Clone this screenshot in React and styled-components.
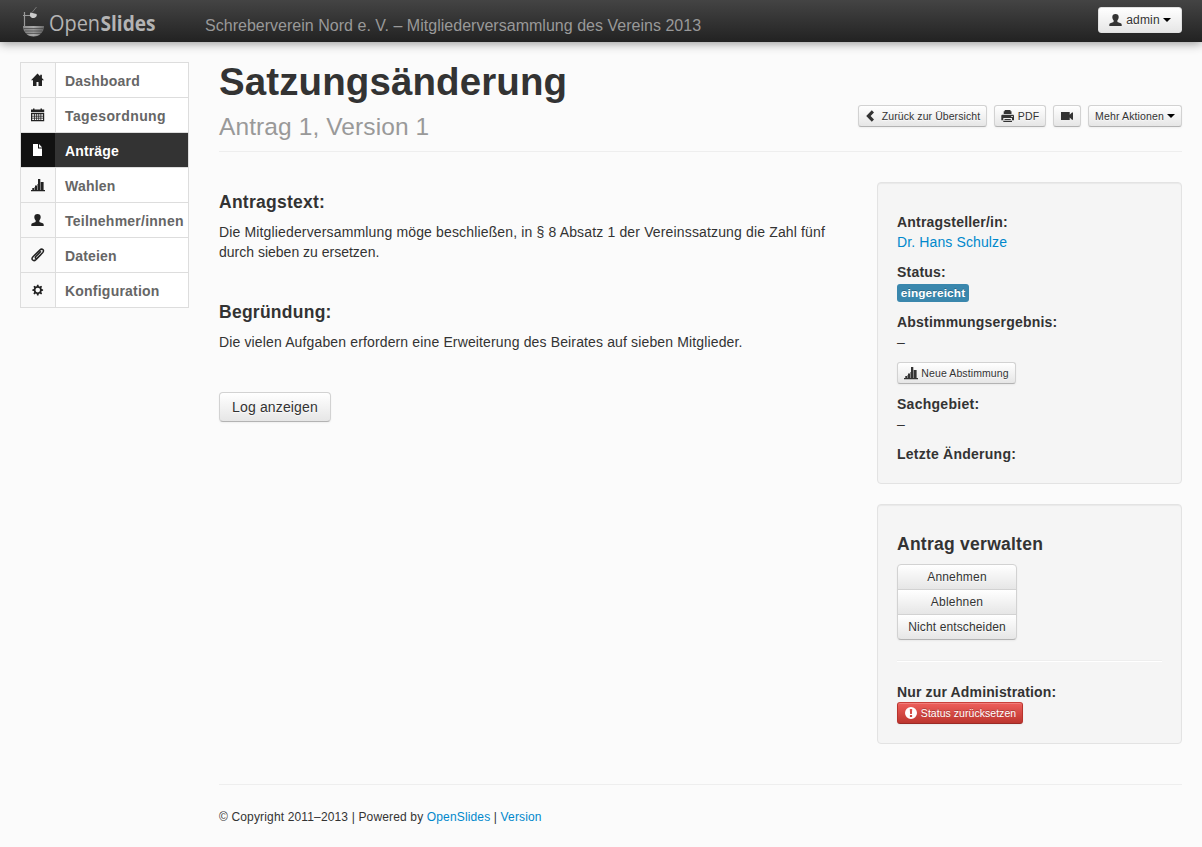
import React from "react";
import styled, { createGlobalStyle, css } from "styled-components";

const Global = createGlobalStyle`
  * { box-sizing: border-box; }
  body {
    margin: 0;
    background: #fbfbfb;
    color: #333;
    font: 14px/20px "Liberation Sans", Arial, sans-serif;
  }
  h1, h4, h5, p { margin: 0; }
`;

const Page = styled.div`
  min-height: 847px;
`;

const Navbar = styled.header`
  display: flex;
  align-items: flex-start;
  height: 42px;
  padding: 0 20px;
  background: linear-gradient(#444, #222);
  box-shadow: 0 1px 10px rgba(0, 0, 0, 0.45);
`;

const Logo = styled.svg`
  flex: none;
  width: 150px;
  height: 42px;
  overflow: visible;
`;

const EventName = styled.div`
  flex: 1;
  padding: 16px 0 0 35px;
  color: #999;
  font-size: 16px;
  letter-spacing: 0.02px;
  white-space: nowrap;
`;

const Columns = styled.div`
  display: flex;
  align-items: flex-start;
  padding: 20px 20px 0;
`;

const Sidebar = styled.nav`
  flex: none;
  width: 169px;
  margin-right: 30px;
  border: 1px solid #ddd;
  background: #fff;
`;

const NavItem = styled.a`
  display: flex;
  height: 35px;
  border-bottom: 1px solid #ddd;
  color: ${(p) => (p.$active ? "#fff" : "#666")};
  background: ${(p) => (p.$active ? "#333" : "#fff")};
  font-weight: bold;
  letter-spacing: ${(p) => p.$ls || 0}px;
  line-height: 36px;
  white-space: nowrap;
  &:last-child { height: 34px; border-bottom: 0; }
`;

const NavIcon = styled.span`
  display: flex;
  flex: none;
  width: 35px;
  padding: 10px;
  margin-right: 9px;
  color: ${(p) => (p.$active ? "#fff" : "#222")};
  background: ${(p) => (p.$active ? "#111" : "#f9f9f9")};
  border-right: 1px solid ${(p) => (p.$active ? "#333" : "#ddd")};
`;

const Content = styled.main`
  flex: 1;
  min-width: 0;
`;

const PageHeader = styled.div`
  display: flex;
  justify-content: space-between;
  height: 90px;
  margin-bottom: 30px;
  border-bottom: 1px solid #eee;
`;

const Title = styled.h1`
  font-size: 38.5px;
  line-height: 40px;
  letter-spacing: 0.1px;
`;

const Subtitle = styled.div`
  padding-top: 5px;
  color: #999;
  font-size: 24.5px;
  line-height: 40px;
  letter-spacing: 0.1px;
`;

const Toolbar = styled.div`
  display: flex;
  gap: 7px;
  padding-top: 43px;
`;

const sizes = {
  mini: css`height: 22px; font-size: 10.5px; line-height: 20px; border-radius: 3px;`,
  small: css`height: 26px; font-size: 12px; line-height: 24px; border-radius: 3px;`,
  normal: css`height: 30px; font-size: 14px; line-height: 28px; border-radius: 4px;`,
};

const danger = css`
  color: #fff;
  text-shadow: 0 -1px 0 rgba(0, 0, 0, 0.25);
  background: linear-gradient(#ee5f5b, #bd362f);
  border-color: #c9403a #b8332d #9a2b26;
`;

const Button = styled.button`
  display: flex;
  align-items: center;
  justify-content: center;
  gap: 3px;
  width: ${(p) => p.$w}px;
  padding: 0;
  color: #333;
  font-family: inherit;
  letter-spacing: ${(p) => p.$ls || 0}px;
  white-space: nowrap;
  text-shadow: 0 1px 1px rgba(255, 255, 255, 0.75);
  background: linear-gradient(#fff, #e6e6e6);
  border: 1px solid #d2d2d2;
  border-bottom-color: #b3b3b3;
  box-shadow: inset 0 1px 0 rgba(255, 255, 255, 0.2), 0 1px 2px rgba(0, 0, 0, 0.05);
  ${(p) => sizes[p.$size || "mini"]}
  ${(p) => p.$danger && danger}
`;

const UserButton = styled(Button)`
  margin-top: 7px;
  border-color: #e0e0e0;
`;

const Caret = styled.span`
  border: 4px solid transparent;
  border-top-color: #000;
  border-bottom: 0;
`;

const Body = styled.div`
  display: flex;
  align-items: flex-start;
  justify-content: space-between;
`;

const Motion = styled.article`
  width: 628px;
  padding-top: 10px;
`;

const Section = styled.section`
  margin-bottom: 40px;
`;

const Heading = styled.h4`
  margin-bottom: 10px;
  font-size: 17.5px;
  line-height: 20px;
  letter-spacing: 0.26px;
`;

const Line = styled.p`
  letter-spacing: ${(p) => p.$ls || 0}px;
  white-space: nowrap;
`;

const Aside = styled.aside`
  width: 305px;
`;

const Well = styled.div`
  height: ${(p) => p.$h}px;
  margin-bottom: 20px;
  padding: 29px 19px 19px;
  background: #f5f5f5;
  border: 1px solid #e3e3e3;
  border-radius: 4px;
  box-shadow: inset 0 1px 1px rgba(0, 0, 0, 0.05);
`;

const Field = styled.div`
  margin-bottom: 10px;
`;

const Label = styled.h5`
  font-size: 14px;
  line-height: 20px;
  letter-spacing: ${(p) => p.$ls ?? 0.2}px;
`;

const Link = styled.a`
  color: #08c;
`;

const BadgeLine = styled.div`
  display: flex;
  height: 20px;
  padding-top: 2px;
`;

const Badge = styled.span`
  width: 72px;
  height: 18px;
  color: #fff;
  font-size: 11.844px;
  font-weight: bold;
  line-height: 18px;
  letter-spacing: 0.12px;
  text-align: center;
  text-shadow: 0 -1px 0 rgba(0, 0, 0, 0.25);
  background: #3a87ad;
  border-radius: 3px;
`;

const ButtonStack = styled.div`
  width: 120px;
  button + button { margin-top: -1px; }
  button { border-radius: 0; }
  button:not(:last-child) { border-bottom-color: #d2d2d2; }
  button:first-child { border-radius: 4px 4px 0 0; }
  button:last-child { border-radius: 0 0 4px 4px; }
`;

const Divider = styled.div`
  height: 2px;
  margin: 20px 0;
  border-top: 1px solid #eee;
  border-bottom: 1px solid #fff;
`;

const Footer = styled.footer`
  margin-top: 20px;
  padding-top: 22px;
  border-top: 1px solid #eee;
  font-size: 12px;
  letter-spacing: 0.15px;
`;

const Glyph = styled.svg`
  flex: none;
  width: 14px;
  height: 14px;
  fill: currentColor;
`;

const shapes = {
  home: <path d="M6.500 .6 0 7.200h2V13h3.500V9h2v4H11V7.200h2L10.900 5V1.700H9.200v1.600z" />,
  calendar: (
    <>
      <path d="M0 1.600h2V.500h1.500v1.100h6V.500H11v1.100h2.200V4H0z" />
      <path fillRule="evenodd" d="M0 4.700h13.200V13.300H0zM1.200 6.200v5.900h10.800V6.200z" />
      <path d="M3.500 6v6.500M5.600 6v6.500M7.700 6v6.500M9.800 6v6.500M1 8.200h11.500M1 10.200h11.500" stroke="currentColor" strokeWidth=".8" />
    </>
  ),
  file: <path d="M2 1h5v4.600h4V13H2zM8 1l3.200 3.600H8z" />,
  signal: (
    <>
      <path d="M0 12h14v1.200H0zM1.300 10h1.900v2.500H1.300zM4 7.500h2v5H4zM7 1h2.300v11.500H7zM10 4h2.600v8.500H10z" />
      <path d="M3.200 9h.8v3h-.8zM6 6h1v6H6zM9.300 4h.7v8h-.7z" opacity=".55" />
    </>
  ),
  user: (
    <path d="M6.500 1C8.600 1 9.700 2.200 9.700 4c0 1.600-.7 2.500-1.300 3.300v1.800l3.300 1.200c.7.300 1 .8 1 1.400V13H.300v-1.300c0-.6.300-1.100 1-1.400l3.300-1.200V7.300C4 6.500 3.300 5.600 3.300 4c0-1.800 1.100-3 3.200-3z" />
  ),
  clip: (
    <path
      fill="none"
      stroke="currentColor"
      strokeWidth="1.500"
      strokeLinecap="round"
      d="M9.500 3.800 4.800 8.600c-1.200 1.300.3 2.700 1.500 1.500l5.500-5.700C13.900 2 11 0 8.800 2.100L2 8.700c-2.400 2.700.5 5.200 2.900 2.900l5.400-5.500"
    />
  ),
  cog: (
    <path
      fillRule="evenodd"
      d="M6 1.700h1.500l.3 1.500 1 .4 1.300-.8 1 1-.8 1.300.4 1 1.400.3v1.400l-1.400.3-.4 1 .8 1.300-1 1-1.300-.8-1 .4-.3 1.500H6l-.3-1.500-1-.4-1.300.8-1-1 .8-1.300-.4-1-1.500-.3V6.400l1.500-.3.4-1-.8-1.300 1-1 1.300.8 1-.4zM6.750 4.800a2.300 2.300 0 1 0 0 4.600 2.300 2.300 0 0 0 0-4.600z"
    />
  ),
  back: <path d="M6.800 1.300 9 3.500 5.600 7 9 10.500l-2.200 2.200L1.200 7z" />,
  print: (
    <path
      fillRule="evenodd"
      d="M3.700 1h5.800v1.200h1V5H2.700V2.200h1zM1.500 5.800h10.300c.7 0 1.200.5 1.200 1.200v4.200h-2V9H2.300v2.200H.300V7c0-.7.5-1.200 1.200-1.200zM3.500 10h6.300v1H3.500zM2.300 11.700H11V13H2.300zM10.300 7v1h1.500V7z"
    />
  ),
  video: <path d="M1 3h8.700v2.700L12 3.600h1v7.200h-1L9.700 8.600V11H1z" />,
  alert: (
    <path
      fillRule="evenodd"
      d="M7 1a6 6 0 1 0 0 12A6 6 0 0 0 7 1zM5.800 3h2.400l-.3 5H6.100zM5.900 9h2.200v1.900H5.900z"
    />
  ),
};

const Icon = ({ name }) => (
  <Glyph viewBox="0 0 14 14" aria-hidden="true">
    {shapes[name]}
  </Glyph>
);

const navigation = [
  { icon: "home", text: "Dashboard", ls: 0.2 },
  { icon: "calendar", text: "Tagesordnung", ls: 0.4 },
  { icon: "file", text: "Anträge", ls: 0.15, active: true },
  { icon: "signal", text: "Wahlen", ls: 0.2 },
  { icon: "user", text: "Teilnehmer/innen", ls: 0.24 },
  { icon: "clip", text: "Dateien", ls: 0.15 },
  { icon: "cog", text: "Konfiguration", ls: 0.22 },
];

const BrandLogo = () => (
  <Logo viewBox="0 0 150 42" role="img" aria-label="OpenSlides">
    <defs>
      <linearGradient id="bowl" x1="0" x2="1">
        <stop offset="0" stopColor="#8c8c8c" />
        <stop offset=".5" stopColor="#aaa" />
        <stop offset="1" stopColor="#6c6c6c" />
      </linearGradient>
    </defs>
    <path d="M3 26h21c0 3-1 5.500-3.500 8-2 1.800-4.500 2.500-7 2.500s-5-.7-7-2.500C4 31.500 3 29 3 26z" fill="url(#bowl)" />
    <path d="M3.500 28.700h20M4.500 31h18M6 33.300h15" stroke="#444" strokeWidth=".9" />
    <path d="M4.500 12v14M3 15.500h8" stroke="#999" strokeWidth="1.200" fill="none" />
    <path d="M12 12.500 16.500 7" stroke="#777" strokeWidth="1" />
    <path d="M10.500 12.500 16.500 14c1 2-1 4-3.500 4s-4-2.500-2.500-5.500z" fill="#ccc" />
    <text x="29" y="31" fill="#b4b4b4" fontFamily="Open Sans, sans-serif" fontSize="22" fontWeight="400" textLength="51" lengthAdjust="spacingAndGlyphs">Open</text>
    <text x="80.500" y="31" fill="#b4b4b4" fontFamily="Open Sans, sans-serif" fontSize="22" fontWeight="700" textLength="55" lengthAdjust="spacingAndGlyphs">Slides</text>
  </Logo>
);

export default function App() {
  return (
    <Page>
      <Global />
      <Navbar>
        <BrandLogo />
        <EventName>Schreberverein Nord e. V. – Mitgliederversammlung des Vereins 2013</EventName>
        <UserButton $size="small" $w={84} $ls={0.2}>
          <Icon name="user" />admin<Caret />
        </UserButton>
      </Navbar>
      <Columns>
        <Sidebar>
          {navigation.map((n) => (
            <NavItem key={n.text} $active={n.active} $ls={n.ls}>
              <NavIcon $active={n.active}><Icon name={n.icon} /></NavIcon>
              {n.text}
            </NavItem>
          ))}
        </Sidebar>
        <Content>
          <PageHeader>
            <div>
              <Title>Satzungsänderung</Title>
              <Subtitle>Antrag 1, Version 1</Subtitle>
            </div>
            <Toolbar>
              <Button $w={129} $ls={0.07}><Icon name="back" />Zurück zur Übersicht</Button>
              <Button $w={52} $ls={0.2}><Icon name="print" />PDF</Button>
              <Button $w={28}><Icon name="video" /></Button>
              <Button $w={94} $ls={0.13}>Mehr Aktionen<Caret /></Button>
            </Toolbar>
          </PageHeader>
          <Body>
            <Motion>
              <Section>
                <Heading>Antragstext:</Heading>
                <Line $ls={0.15}>Die Mitgliederversammlung möge beschließen, in § 8 Absatz 1 der Vereinssatzung die Zahl fünf</Line>
                <Line>durch sieben zu ersetzen.</Line>
              </Section>
              <Section>
                <Heading>Begründung:</Heading>
                <Line $ls={0.14}>Die vielen Aufgaben erfordern eine Erweiterung des Beirates auf sieben Mitglieder.</Line>
              </Section>
              <Button $size="normal" $w={112} $ls={0.15}>Log anzeigen</Button>
            </Motion>
            <Aside>
              <Well $h={302}>
                <Field>
                  <Label>Antragsteller/in:</Label>
                  <Line $ls={0.12}><Link>Dr. Hans Schulze</Link></Line>
                </Field>
                <Field>
                  <Label>Status:</Label>
                  <BadgeLine><Badge>eingereicht</Badge></BadgeLine>
                </Field>
                <Field>
                  <Label>Abstimmungsergebnis:</Label>
                  <Line>–</Line>
                </Field>
                <Field><Button $w={119} $ls={0.1}><Icon name="signal" />Neue Abstimmung</Button></Field>
                <Field>
                  <Label $ls={0.27}>Sachgebiet:</Label>
                  <Line>–</Line>
                </Field>
                <Label $ls={0.25}>Letzte Änderung:</Label>
              </Well>
              <Well $h={240}>
                <Heading>Antrag verwalten</Heading>
                <ButtonStack>
                  <Button $size="small" $w={120} $ls={0.2}>Annehmen</Button>
                  <Button $size="small" $w={120} $ls={0.2}>Ablehnen</Button>
                  <Button $size="small" $w={120} $ls={0.13}>Nicht entscheiden</Button>
                </ButtonStack>
                <Divider />
                <Label $ls={0.15}>Nur zur Administration:</Label>
                <Button $w={126} $ls={0.04} $danger><Icon name="alert" />Status zurücksetzen</Button>
              </Well>
            </Aside>
          </Body>
          <Footer>
            © Copyright 2011–2013 | Powered by <Link>OpenSlides</Link> | <Link>Version</Link>
          </Footer>
        </Content>
      </Columns>
    </Page>
  );
}
